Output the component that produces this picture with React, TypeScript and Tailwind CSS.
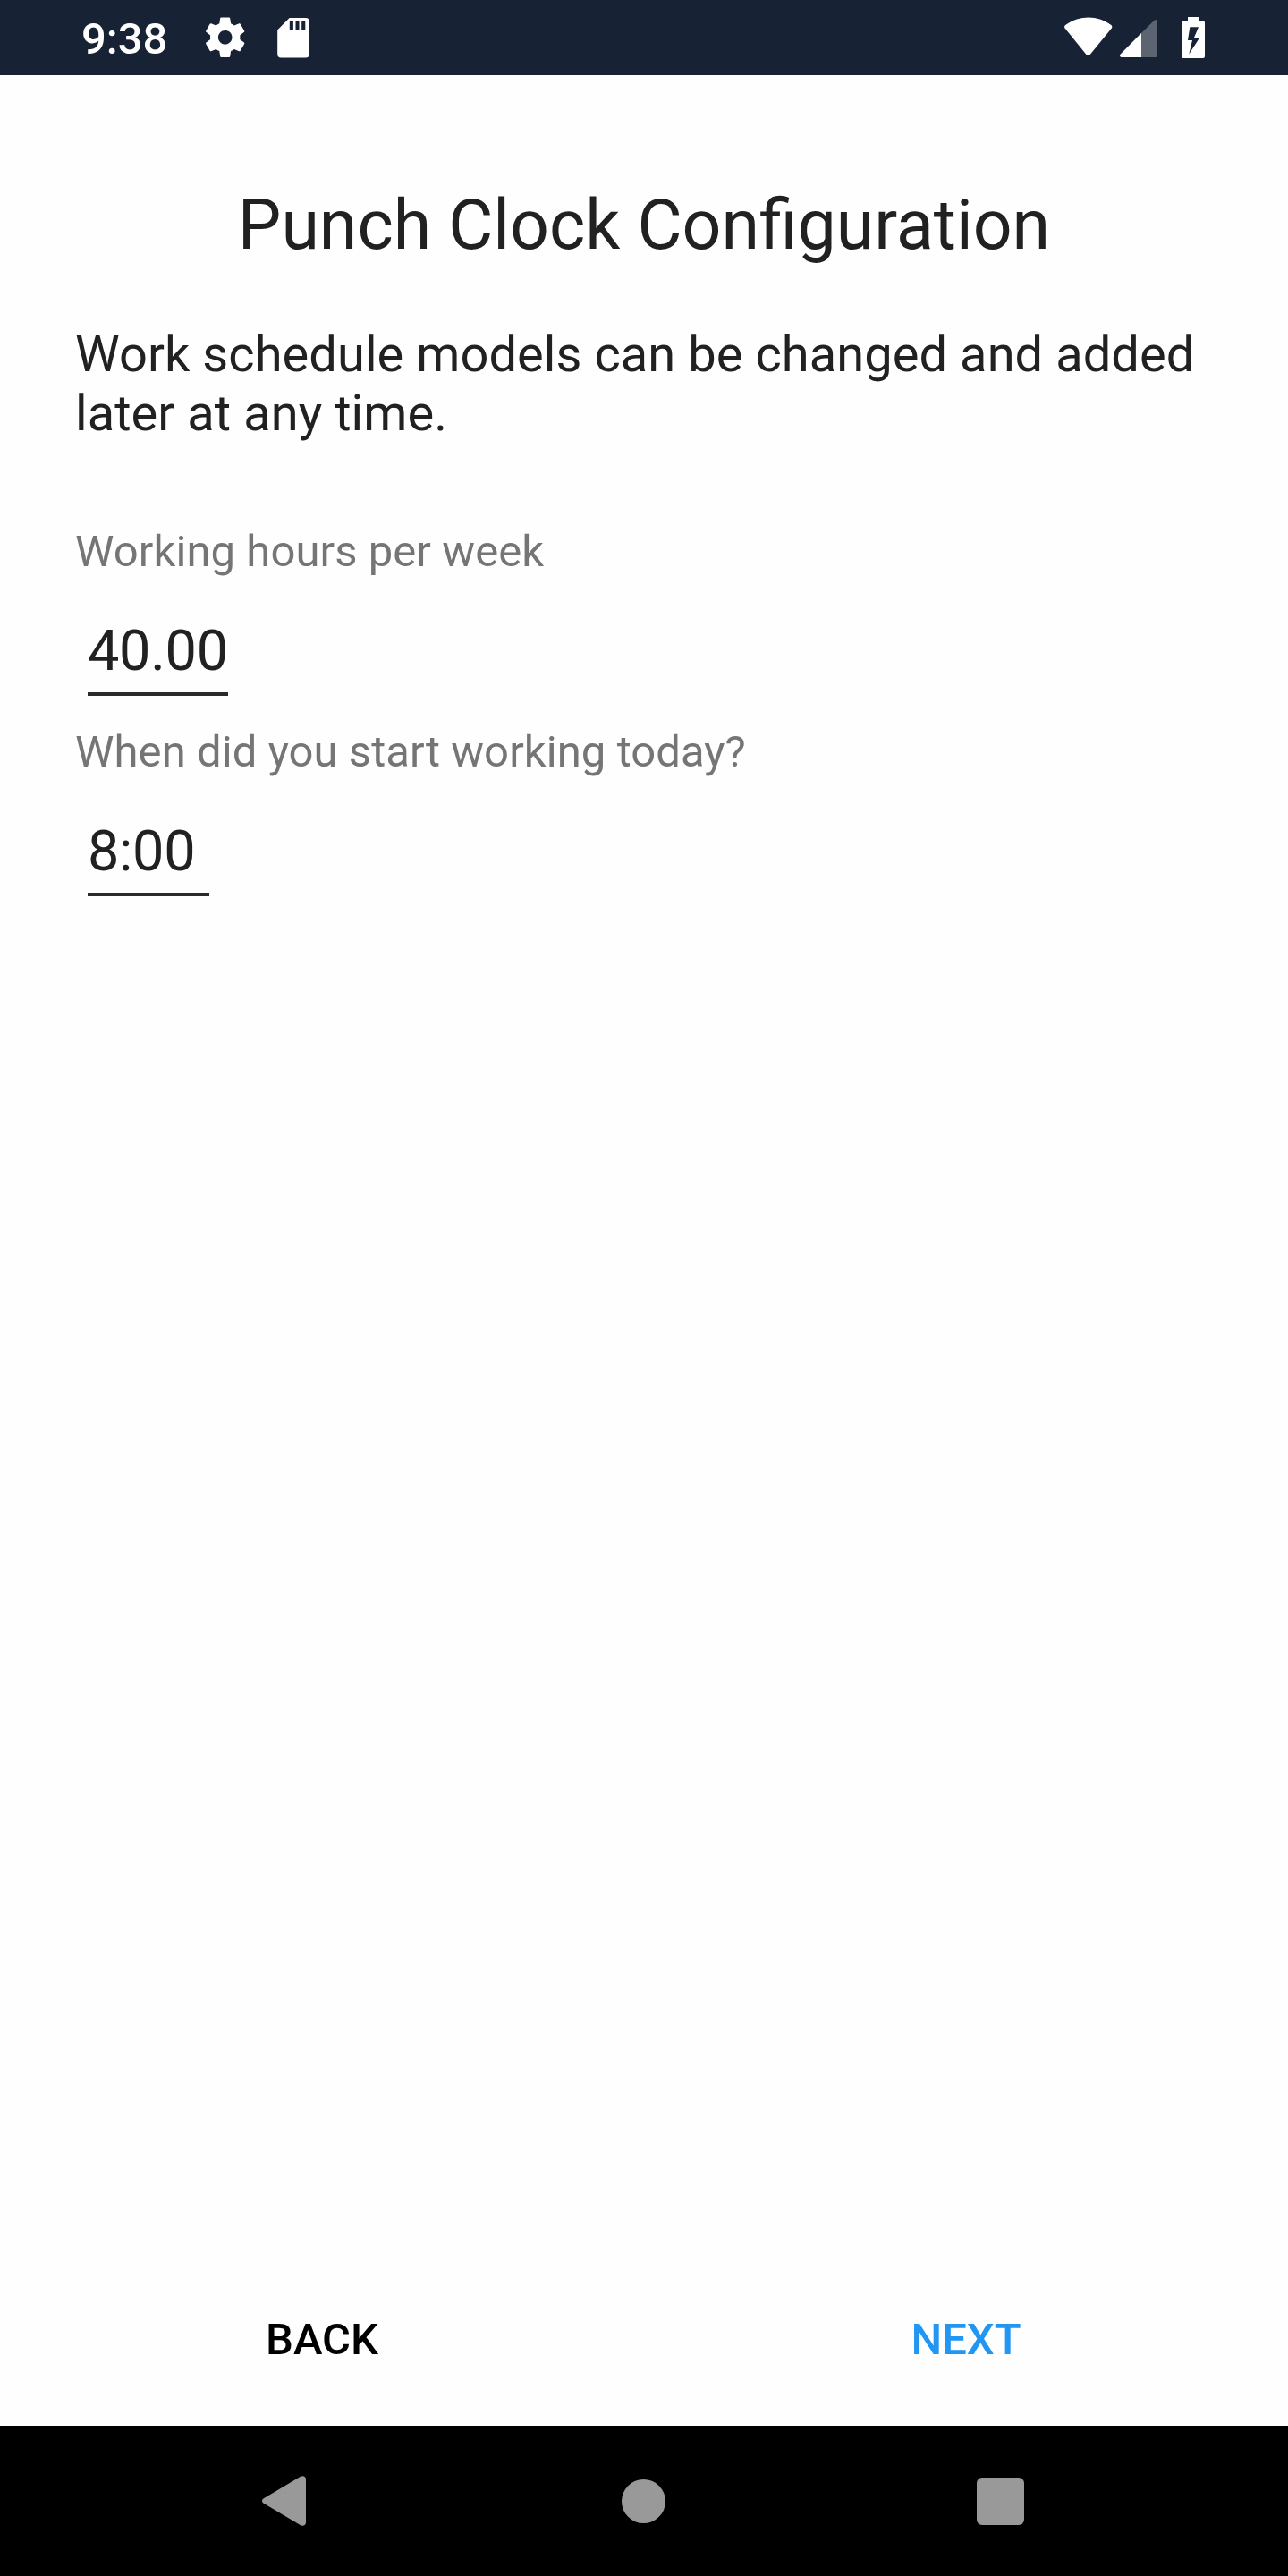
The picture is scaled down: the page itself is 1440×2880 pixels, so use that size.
import { FC, ReactNode } from 'react';
import clsx from 'clsx';

const StatusBar = () => (
  <header className="flex h-[84px] shrink-0 items-center justify-between bg-[#172234] pl-[91px] pr-[92px] text-white">
    <div className="flex items-center">
      <span className="w-[134px] pt-[3px] text-[49px] font-medium leading-[81px]">9:38</span>
      <svg className="size-[53.4px]" viewBox="0 0 24 24" fill="currentColor">
        <path d="M19.43 12.98c.04-.32.07-.64.07-.98s-.03-.66-.07-.98l2.11-1.65c.19-.15.24-.42.12-.64l-2-3.46c-.12-.22-.39-.3-.61-.22l-2.49 1c-.52-.4-1.08-.73-1.69-.98l-.38-2.65C14.46 2.18 14.25 2 14 2h-4c-.25 0-.46.18-.49.42l-.38 2.65c-.61.25-1.17.59-1.69.98l-2.49-1c-.23-.09-.49 0-.61.22l-2 3.46c-.13.22-.07.49.12.64l2.11 1.65c-.04.32-.07.65-.07.98s.03.66.07.98l-2.11 1.65c-.19.15-.24.42-.12.64l2 3.46c.12.22.39.3.61.22l2.49-1c.52.4 1.08.73 1.69.98l.38 2.65c.03.24.24.42.49.42h4c.25 0 .46-.18.49-.42l.38-2.65c.61-.25 1.17-.59 1.69-.98l2.49 1c.23.09.49 0 .61-.22l2-3.46c.12-.22.07-.49-.12-.64l-2.11-1.65zM12 15.5c-1.93 0-3.5-1.57-3.5-3.5s1.57-3.5 3.5-3.5 3.5 1.57 3.500 3.500-1.57 3.500-3.500 3.500z" />
      </svg>
      <svg className="ml-[32px] h-[84px] w-[36px]" viewBox="0 0 36 84" fill="currentColor" fillRule="evenodd">
        <path d="M13.6 20H31.8a4 4 0 0 1 4 4V60.5a4 4 0 0 1-4 4H4.2a4 4 0 0 1-4-4V33.4zM13.8 24V34H17.9V24zM20.5 24V34H24.5V24zM27.2 24V34H31.3V24z" />
      </svg>
    </div>
    <div className="flex items-center">
      <svg className="h-[84px] w-[54px]" viewBox="0 0 54 84" fill="currentColor">
        <path d="M.6 31.5C-.3 30.3-.1 28.9 1.2 28C17.5 16.7 36.5 16.7 52.3 28C53.5 28.9 53.7 30.3 52.8 31.5L28.700 61C27.5 62.4 25.7 62.4 24.500 61z" />
      </svg>
      <svg className="ml-[8px] h-[84px] w-[42px]" viewBox="0 0 42 84" fill="currentColor">
        <path d="M24 37L38.5 22.7C40 21.3 42 22 42 24V62a2 2 0 0 1-2 2H24z" opacity=".3" />
        <path d="M24 37V64H2.2C0 64-.7 62 .7 60.5z" />
      </svg>
      <svg className="ml-[27px] h-[84px] w-[27px]" viewBox="0 0 27 84" fill="currentColor" fillRule="evenodd">
        <path d="M7 19H19V23.3H24a2 2 0 0 1 2 2V63a2 2 0 0 1-2 2H2a2 2 0 0 1-2-2V25.3a2 2 0 0 1 2-2H7zM9.3 30.3L7 45H12L8.3 60.5L20.3 42H14L19 30.3z" />
      </svg>
    </div>
  </header>
);

interface FieldProps {
  label: string;
  value: string;
  inputClass: string;
}

const Field: FC<FieldProps> = ({ label, value, inputClass }) => (
  <label className="flex h-[224px] flex-col">
    <span className="text-[49px] leading-[58px] tracking-[0.07px] text-[#757575]">{label}</span>
    <input
      className={clsx(
        'ml-[14px] mt-[44px] h-[88px] border-b-4 border-[#2b2a2b] bg-transparent p-0 pb-[10px] text-[63px] leading-[74px] tracking-[-0.3px] outline-none',
        inputClass
      )}
      defaultValue={value}
    />
  </label>
);

const NavButton: FC<{ children: ReactNode; className: string }> = ({ children, className }) => (
  <button className={clsx('flex-1 text-[49px] font-medium leading-[58px]', className)}>
    {children}
  </button>
);

const SystemNav = () => (
  <nav className="flex h-[168px] shrink-0 items-center bg-black pl-[293px] text-[#999]">
    <svg className="h-[56px] w-[49px]" viewBox="0 0 49 56" fill="currentColor">
      <path d="M1.8 25.2L43 .8C46-.9 49 .8 49 4V52C49 55.2 46 56.9 43 55.2L1.8 30.8C-.6 29.3-.6 26.7 1.8 25.2z" />
    </svg>
    <div className="ml-[353px] size-[49px] rounded-full bg-current" />
    <div className="ml-[347.5px] size-[53px] rounded-[6px] bg-current" />
  </nav>
);

export default function App() {
  return (
    <div className="flex h-[2880px] w-[1440px] flex-col bg-[#fefefe] font-[Roboto,sans-serif] text-[#212121]">
      <StatusBar />
      <main className="flex flex-1 flex-col px-[84px] pt-[123px]">
        <h1 className="text-center text-[77px] leading-[90px]">Punch Clock Configuration</h1>
        <p className="mb-[93px] mt-[66px] text-[56px] leading-[66px] tracking-[0.06px]">
          Work schedule models can be changed and added later at any time.
        </p>
        <Field label="Working hours per week" value="40.00" inputClass="w-[157px]" />
        <Field label="When did you start working today?" value="8:00" inputClass="w-[136px]" />
      </main>
      <footer className="flex pb-[67px]">
        <NavButton className="text-black">BACK</NavButton>
        <NavButton className="text-[#2196f3]">NEXT</NavButton>
      </footer>
      <SystemNav />
    </div>
  );
}
